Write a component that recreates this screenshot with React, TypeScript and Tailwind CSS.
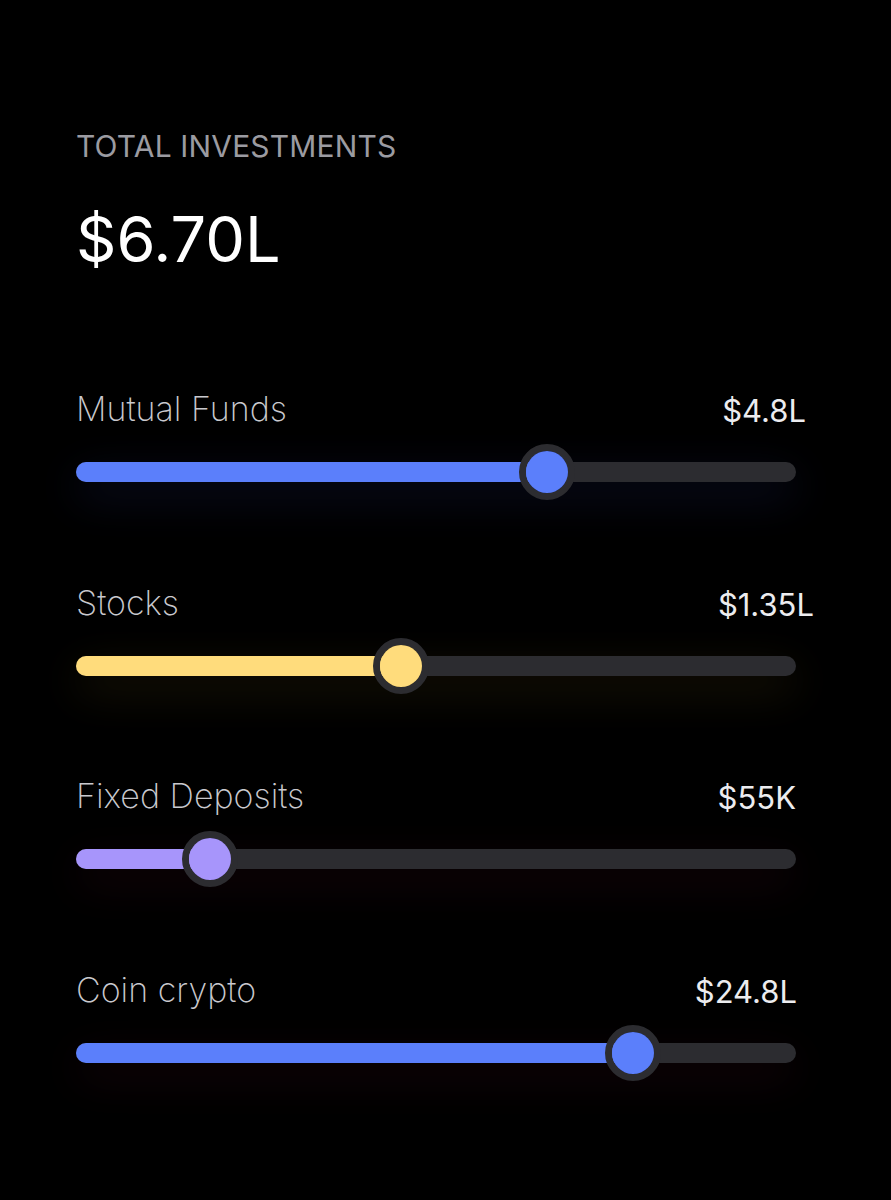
import React from "react";

interface Investment {
  label: string;
  value: string;
  percent: number;
  fill: string;
  glow: string;
  valueOffset: string;
}

const investments: Investment[] = [
  {
    label: "Mutual Funds",
    value: "$4.8L",
    percent: 65.4,
    fill: "bg-[#5b7ffb]",
    glow: "shadow-[0_14px_44px_rgba(70,90,220,0.18)]",
    valueOffset: "-mr-[10px]",
  },
  {
    label: "Stocks",
    value: "$1.35L",
    percent: 45.1,
    fill: "bg-[#ffdc7c]",
    glow: "shadow-[0_14px_44px_rgba(220,180,60,0.14)]",
    valueOffset: "-mr-[18px]",
  },
  {
    label: "Fixed Deposits",
    value: "$55K",
    percent: 18.6,
    fill: "bg-[#a795fb]",
    glow: "shadow-[0_14px_44px_rgba(150,30,70,0.16)]",
    valueOffset: "mr-0",
  },
  {
    label: "Coin crypto",
    value: "$24.8L",
    percent: 77.4,
    fill: "bg-[#5b7ffb]",
    glow: "shadow-[0_14px_44px_rgba(150,30,70,0.16)]",
    valueOffset: "-mr-[1px]",
  },
];

const SliderRow: React.FC<{ item: Investment }> = ({ item }) => {
  return (
    <div className="h-[193.5px] flex flex-col">
      <div className="flex items-end justify-between">
        <span className="text-[34px] leading-none font-extralight text-[#c9c9ce]">
          {item.label}
        </span>
        <span className={`text-[31px] leading-none font-normal text-[#ececef] ${item.valueOffset}`}>
          {item.value}
        </span>
      </div>

      {/* Track */}
      <div className={`relative mt-[36px] h-[20px] w-full rounded-full bg-[#2c2c30] ${item.glow}`}>
        <div
          className={`h-full rounded-full ${item.fill}`}
          style={{ width: `${item.percent}%` }}
        />
        {/* Knob */}
        <div
          className="absolute top-1/2 w-[56px] h-[56px] -translate-x-1/2 -translate-y-1/2 rounded-full border-[7px] border-[#2c2c30]"
          style={{ left: `${item.percent}%` }}
        >
          <div className={`w-full h-full rounded-full ${item.fill}`} />
        </div>
      </div>
    </div>
  );
};

export default function App() {
  return (
    <div
      className="min-h-screen w-full bg-black"
      style={{ fontFamily: "Inter, 'Noto Sans', sans-serif" }}
    >
      <div className="w-[720px] ml-[76px] pt-[131px]">
        <div className="text-[30px] leading-none text-[#9b9ba1] tracking-[0.005em]">
          TOTAL INVESTMENTS
        </div>
        <div className="mt-[47px] text-[63px] leading-none text-white font-normal">
          $6.70L
        </div>

        <div className="mt-[121px]">
          {investments.map((item) => (
            <SliderRow key={item.label} item={item} />
          ))}
        </div>
      </div>
    </div>
  );
}
